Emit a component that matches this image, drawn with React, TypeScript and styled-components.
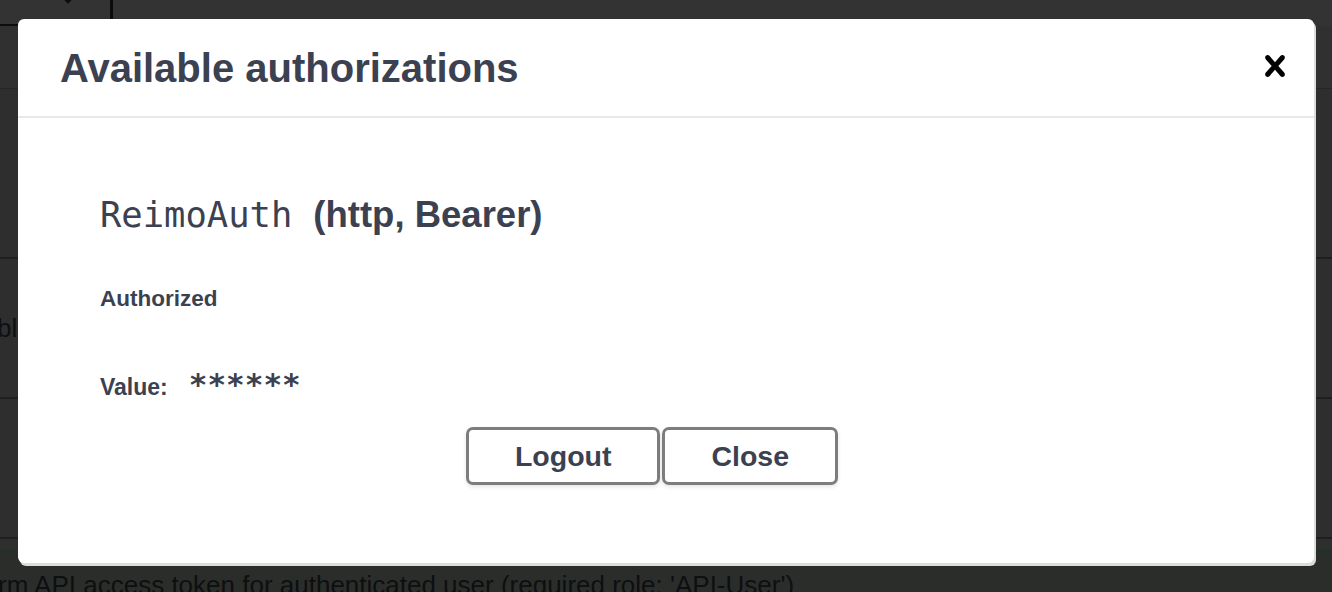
import React from "react";
import styled, { createGlobalStyle } from "styled-components";

const GlobalStyle = createGlobalStyle`
  html, body { margin: 0; padding: 0; }
  body {
    width: 1332px;
    height: 592px;
    overflow: hidden;
    background: #2e2e2e;
    font-family: "Liberation Sans", Arial, sans-serif;
  }
`;

const Page = styled.div`
  position: relative;
  width: 1332px;
  height: 592px;
  overflow: hidden;
  display: flex;
  flex-direction: column;
  background: #2e2e2e;
`;

const TopStrip = styled.div`
  height: 26px;
  flex: none;
  background: #333333;
  display: flex;
`;

const SelectBox = styled.div`
  box-sizing: border-box;
  margin-left: -20px;
  width: 133px;
  height: 27px;
  border-right: 3px solid #0c0c0c;
  border-bottom: 3px solid #0c0c0c;
  display: flex;
  justify-content: flex-end;
  align-items: flex-start;
  padding-right: 36px;
`;

const Chevron = styled.svg`
  margin-top: -7px;
  width: 12px;
  height: 12px;
`;

const Band = styled.div<{ $h: number; $bg?: string; $line?: string; $lineW?: number }>`
  flex: none;
  box-sizing: border-box;
  height: ${(p) => p.$h}px;
  background: ${(p) => p.$bg ?? "#2e2e2e"};
  border-bottom: ${(p) => (p.$line ? `${p.$lineW ?? 2}px solid ${p.$line}` : "none")};
  display: flex;
  align-items: center;
  overflow: hidden;
`;

const GhostText = styled.span<{ $size: number; $shift?: number }>`
  font-size: ${(p) => p.$size}px;
  color: #0e0f11;
  white-space: nowrap;
  margin-left: ${(p) => p.$shift ?? 0}px;
`;

const BottomBand = styled.div`
  flex: 1;
  background: #2b2d2b;
  display: flex;
  align-items: flex-end;
  overflow: hidden;
`;

const BottomText = styled(GhostText)`
  margin-bottom: -9px;
`;

/* ---------- modal ---------- */

const Modal = styled.div`
  position: absolute;
  left: 18px;
  top: 19px;
  width: 1296px;
  height: 544px;
  background: #ffffff;
  border-radius: 6px;
  box-shadow: 2px 3px 0 0 #dcdcdc;
  display: flex;
  flex-direction: column;
  color: #3b4151;
`;

const Header = styled.div`
  box-sizing: border-box;
  height: 99px;
  flex: none;
  border-bottom: 2px solid #e8e8e8;
  display: flex;
  align-items: center;
  justify-content: space-between;
  padding: 0 18px 0 42px;
`;

const Title = styled.h3`
  margin: 0;
  font-size: 40px;
  font-weight: 700;
  line-height: 1;
  color: #3b4151;
`;

const CloseButton = styled.button`
  border: none;
  background: none;
  padding: 0;
  width: 42px;
  height: 42px;
  margin-bottom: 4px;
  display: flex;
  align-items: center;
  justify-content: center;
  cursor: pointer;
`;

const Body = styled.div`
  padding: 79px 82px 0 82px;
  display: flex;
  flex-direction: column;
`;

const SchemeHeading = styled.h4`
  margin: 0;
  display: flex;
  align-items: baseline;
  line-height: 1;
`;

const SchemeName = styled.code`
  font-family: "DejaVu Sans Mono", "Liberation Mono", monospace;
  font-size: 35.5px;
  font-weight: 400;
  color: #3b4151;
  margin-right: 21px;
`;

const SchemeType = styled.span`
  font-size: 36.5px;
  font-weight: 700;
  color: #3b4151;
`;

const Label = styled.div<{ $top: number }>`
  margin-top: ${(p) => p.$top}px;
  font-size: 22.5px;
  font-weight: 700;
  line-height: 1;
`;

const ValueRow = styled.div`
  margin-top: 59px;
  display: flex;
  align-items: baseline;
  line-height: 1;
`;

const ValueLabel = styled.span`
  font-size: 23px;
  font-weight: 700;
  margin-right: 21px;
`;

const Masked = styled.code`
  font-family: "DejaVu Sans Mono", "Liberation Mono", monospace;
  font-size: 31px;
  font-weight: 700;
  color: #3b4151;
`;

const ButtonRow = styled.div`
  margin-top: 27px;
  display: flex;
  justify-content: center;
  gap: 2px;
`;

const Btn = styled.button<{ $last?: boolean }>`
  box-sizing: border-box;
  height: 58px;
  padding: 0 46px;
  border: 3px solid #7d7d7d;
  border-radius: 7px;
  background: #ffffff;
  box-shadow: 0 2px 4px rgba(0, 0, 0, 0.1);
  font-family: "Liberation Sans", Arial, sans-serif;
  font-size: 28.5px;
  font-weight: 700;
  color: #3b4151;
  margin-right: ${(p) => (p.$last ? 28 : 0)}px;
  cursor: pointer;
`;

export default function App() {
  return (
    <>
      <GlobalStyle />
      <Page>
        <TopStrip>
          <SelectBox>
            <Chevron viewBox="0 0 12 12">
              <path d="M1 4 L6 9 L11 4" fill="none" stroke="#0c0c0c" strokeWidth="2.4" />
            </Chevron>
          </SelectBox>
        </TopStrip>
        <Band $h={63} $bg="#303030" $line="#272727" $lineW={1} />
        <Band $h={170} $line="#1f1f1f" />
        <Band $h={140} $line="#1f1f1f">
          <GhostText $size={26} $shift={-3}>bla</GhostText>
        </Band>
        <Band $h={140} $line="#1f1f1f" />
        <Band $h={13} $line="#1d3327" />
        <BottomBand>
          <BottomText $size={26} $shift={-2}>
            rm API access token for authenticated user (required role: 'API-User')
          </BottomText>
        </BottomBand>

        <Modal>
          <Header>
            <Title>Available authorizations</Title>
            <CloseButton aria-label="Close">
              <svg width="42" height="42" viewBox="0 0 20 20">
                <path
                  fill="#000"
                  d="M14.348 14.849c-.469.469-1.229.469-1.697 0L10 11.819l-2.651 3.029c-.469.469-1.229.469-1.697 0-.469-.469-.469-1.229 0-1.697l2.758-3.150-2.759-3.152c-.469-.469-.469-1.228 0-1.697.469-.469 1.228-.469 1.697 0L10 8.183l2.651-3.031c.469-.469 1.228-.469 1.697 0 .469.469.469 1.229 0 1.697l-2.758 3.152 2.758 3.150c.469.469.469 1.229 0 1.698z"
                />
              </svg>
            </CloseButton>
          </Header>
          <Body>
            <SchemeHeading>
              <SchemeName>ReimoAuth</SchemeName>
              <SchemeType>(http, Bearer)</SchemeType>
            </SchemeHeading>
            <Label $top={54}>Authorized</Label>
            <ValueRow>
              <ValueLabel>Value:</ValueLabel>
              <Masked>******</Masked>
            </ValueRow>
            <ButtonRow>
              <Btn>Logout</Btn>
              <Btn $last>Close</Btn>
            </ButtonRow>
          </Body>
        </Modal>
      </Page>
    </>
  );
}
